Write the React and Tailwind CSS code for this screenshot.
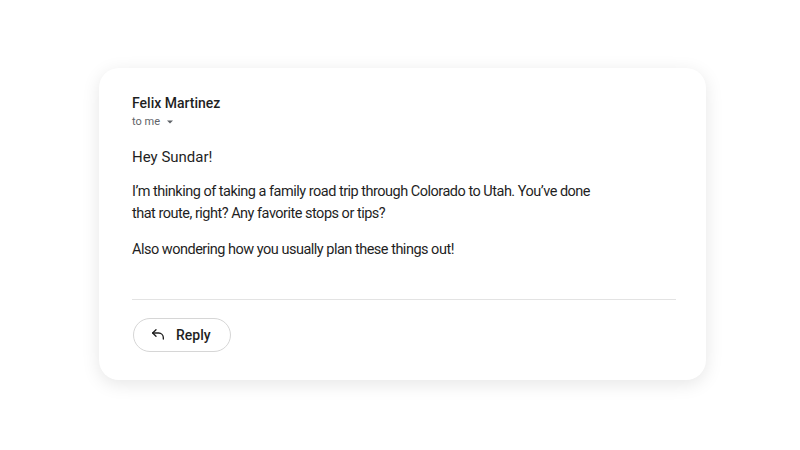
import React from 'react';

function ReplyIcon() {
  return (
    <svg width="16" height="16" viewBox="0 0 24 24" fill="none" stroke="#1f1f1f" strokeWidth="2" strokeLinecap="round" strokeLinejoin="round">
      <path d="M9 14L4 9l5-5" />
      <path d="M4 9h9a7 7 0 0 1 7 7v2" />
    </svg>
  );
}

export default function App() {
  return (
    <div className="w-[800px] h-[450px] bg-white flex items-start pl-[99px] pt-[68px]" style={{ fontFamily: 'Roboto, "Open Sans", sans-serif' }}>
      <div className="w-[607px] h-[312px] bg-white rounded-[20px] shadow-[0_4px_18px_rgba(0,0,0,0.10)] pl-[33px] pr-[30px] pt-[26px]">
        <div className="text-[14px] font-medium text-[#1f1f1f] leading-[18px]">Felix Martinez</div>
        <div className="flex items-center gap-[6px] text-[11px] text-[#5f6368] mt-[3px] leading-[14px]">
          <span>to me</span>
          <svg width="8" height="8" viewBox="0 0 8 8"><path d="M1 2.5h6L4 5.5z" fill="#5f6368" /></svg>
        </div>
        <div className="text-[14.5px] text-[#1f1f1f] leading-[22px] mt-[17px] tracking-[-0.5px]">
          <p className="text-[15px] tracking-normal">Hey Sundar!</p>
          <p className="mt-[13px]">I’m thinking of taking a family road trip through Colorado to Utah. You’ve done<br />that route, right? Any favorite stops or tips?</p>
          <p className="mt-[14px]">Also wondering how you usually plan these things out!</p>
        </div>
        <div className="border-t border-[#e3e3e3] mt-[38px]" />
        <button className="mt-[18px] ml-[1px] flex items-center gap-[10px] h-[34px] pl-[16px] pr-[19px] rounded-full border border-[#d6d6d6] text-[14px] font-medium text-[#1f1f1f]">
          <ReplyIcon />
          Reply
        </button>
      </div>
    </div>
  );
}
